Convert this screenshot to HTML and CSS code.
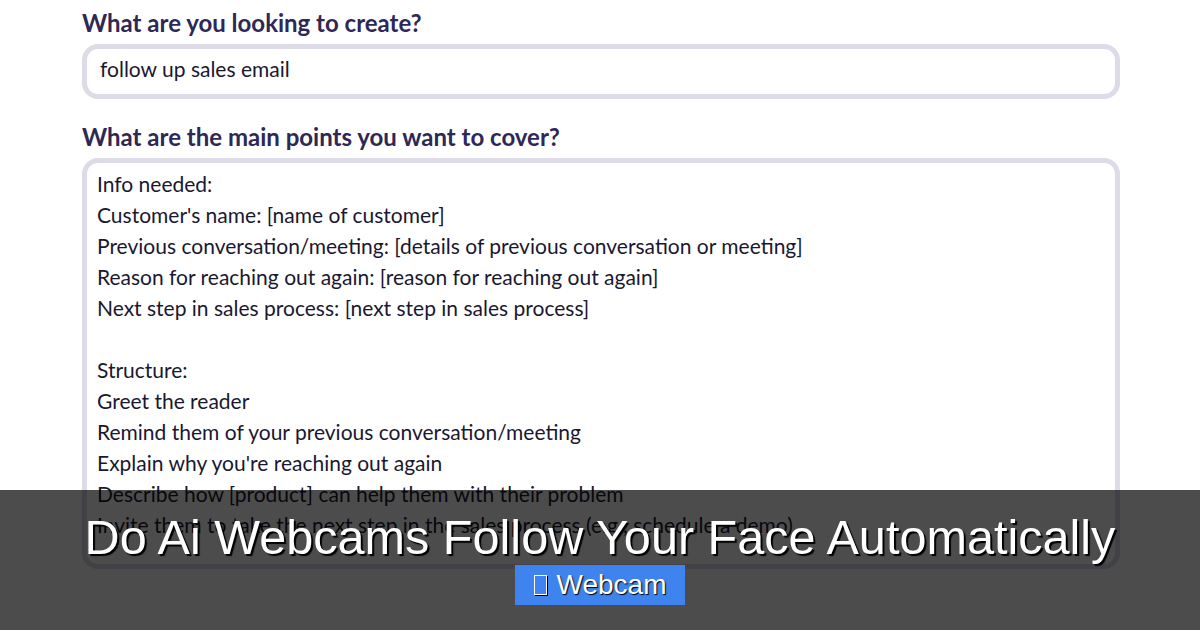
FILE: index.html
```html
<!DOCTYPE html>
<html lang="en">
  <head>
    <meta charset="UTF-8" />
    <meta name="viewport" content="width=device-width, initial-scale=1.0" />
    <title>Do Ai Webcams Follow Your Face Automatically</title>
    <link rel="stylesheet" href="styles.css">
  </head>
  <body>
    <form class="prompt-form">
      <label class="field-label" for="goal">What are you looking to create?</label>
      <div class="field-box field-input" id="goal">follow up sales email</div>

      <label class="field-label" for="points">What are the main points you want to cover?</label>
      <div class="field-box field-area" id="points">
        <p>Info needed:</p>
        <p>Customer's name: [name of customer]</p>
        <p>Previous conversation/meeting: [details of previous conversation or meeting]</p>
        <p>Reason for reaching out again: [reason for reaching out again]</p>
        <p>Next step in sales process: [next step in sales process]</p>
        <p>&nbsp;</p>
        <p>Structure:</p>
        <p>Greet the reader</p>
        <p>Remind them of your previous conversation/meeting</p>
        <p>Explain why you're reaching out again</p>
        <p>Describe how [product] can help them with their problem</p>
        <p>Invite them to take the next step in the sales process (e.g., schedule a demo)</p>
      </div>
    </form>

    <div class="caption">
      <h1 class="caption-title">Do Ai Webcams Follow Your Face Automatically</h1>
      <span class="caption-tag"><span class="tofu"></span>Webcam</span>
    </div>
  </body>
</html>
```

FILE: styles.css
```css
body {
  margin: 0;
  background: #fff;
  font-family: "Lato", "Liberation Sans", sans-serif;
  color: #1a1830;
}
.prompt-form {
  width: 1038px;
  padding: 9px 0 0 82px;
}
.field-label {
  display: block;
  font-weight: 700;
  font-size: 24px;
  line-height: 28px;
  color: #2e2857;
  margin-bottom: 7px;
}
.field-box {
  border: 5px solid #dcdbe7;
  border-radius: 16px;
  font-size: 21px;
}
.field-input {
  height: 40px;
  line-height: 40px;
  padding: 0 0 5px 13px;
  margin-bottom: 24px;
}
.field-area {
  height: 391px;
  padding: 5px 10px;
  line-height: 31px;
}
.field-area p {
  margin: 0;
  white-space: nowrap;
}
.caption {
  position: absolute;
  left: 0;
  top: 490px;
  width: 1200px;
  height: 140px;
  background: rgba(0, 0, 0, 0.7);
  display: flex;
  flex-direction: column;
  align-items: center;
}
.caption-title {
  margin: 20px 0 0;
  font-family: "Liberation Sans", Arial, sans-serif;
  font-weight: 400;
  font-size: 48.6px;
  line-height: 54px;
  color: #fff;
  text-shadow: 2px 2px 1px #000;
}
.caption-tag {
  margin-top: 1px;
  height: 40px;
  padding: 0 19px;
  display: flex;
  align-items: center;
  gap: 10px;
  background: #3f83ef;
  color: #fff;
  font-family: "Liberation Sans", Arial, sans-serif;
  font-size: 28px;
  text-shadow: 1px 1px 1px #000;
}
.tofu {
  width: 11px;
  height: 18px;
  border: 1px solid #fff;
  box-shadow: 1px 1px 0 #000;
}
```
